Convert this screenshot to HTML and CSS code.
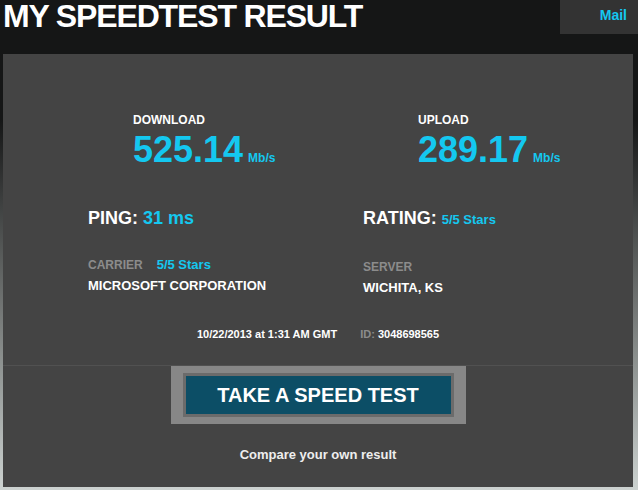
FILE: index.html
```html
<!DOCTYPE html>
<html lang="en">
<head>
  <meta charset="UTF-8" />
  <meta name="viewport" content="width=device-width, initial-scale=1.0" />
  <title>My Speedtest Result</title>
  <link rel="stylesheet" href="styles.css">
</head>
<body>
  <header class="topbar">
    <h1 class="title">MY SPEEDTEST RESULT</h1>
    <a class="mail" href="#">Mail</a>
  </header>

  <main class="panel">
    <!-- Download / upload -->
    <div class="speeds">
      <div class="speed">
        <div class="label">DOWNLOAD</div>
        <div class="value">525.14<span class="unit">Mb/s</span></div>
      </div>
      <div class="speed">
        <div class="label">UPLOAD</div>
        <div class="value">289.17<span class="unit">Mb/s</span></div>
      </div>
    </div>

    <!-- Ping / rating -->
    <div class="stats">
      <div class="stat">
        <div class="big">PING: <span class="accent">31 ms</span></div>
        <div class="meta"><span class="dim">CARRIER</span><span class="accent">5/5 Stars</span></div>
        <div class="name">MICROSOFT CORPORATION</div>
      </div>
      <div class="stat">
        <div class="big">RATING: <span class="accent small">5/5 Stars</span></div>
        <div class="meta"><span class="dim">SERVER</span></div>
        <div class="name">WICHITA, KS</div>
      </div>
    </div>

    <div class="stamp">
      <span>10/22/2013 at 1:31 AM GMT</span>
      <span class="id"><span class="dim">ID:</span> 3048698565</span>
    </div>

    <div class="cta">
      <a class="btn-frame" href="#"><span class="btn">TAKE A SPEED TEST</span></a>
      <p class="compare">Compare your own result</p>
    </div>
  </main>
</body>
</html>
```

FILE: styles.css
```css
body {
  margin: 0;
  height: 490px;
  overflow: hidden;
  font-family: "Liberation Sans", Arial, sans-serif;
  font-weight: bold;
  color: #fff;
  background: linear-gradient(to bottom, #151616 0, #151616 120px, #ccd2d0 490px);
}
.topbar {
  display: flex;
  justify-content: space-between;
  align-items: flex-start;
  height: 34px;
}
.title {
  margin: 0 0 0 3px;
  font-size: 32px;
  line-height: 32px;
  letter-spacing: -1.15px;
}
.mail {
  width: 78px;
  height: 34px;
  box-sizing: border-box;
  padding: 7px 11px 0 0;
  text-align: right;
  background: #333;
  color: #14c8f0;
  font-size: 14px;
  line-height: 16px;
  text-decoration: none;
}
.panel {
  margin: 20px 5px 0 3px;
  width: 630px;
  height: 433px;
  background: #444;
}
.accent {
  color: #14c8f0;
}
.dim {
  color: #8c8c8c;
}
.speeds {
  display: grid;
  grid-template-columns: 285px 1fr;
  padding: 59px 0 0 130px;
}
.label {
  font-size: 12px;
  line-height: 14px;
}
.value {
  margin-top: 5px;
  font-size: 36px;
  line-height: 36px;
  color: #14c8f0;
}
.unit {
  margin-left: 5px;
  font-size: 12px;
}
.stats {
  display: grid;
  grid-template-columns: 275px 1fr;
  margin-top: 32px;
  padding-left: 85px;
}
.big {
  font-size: 18px;
  line-height: 20px;
}
.big .small {
  font-size: 13px;
}
.meta {
  margin-top: 30px;
  font-size: 12px;
  line-height: 14px;
}
.meta .accent {
  margin-left: 14px;
  font-size: 13px;
}
.name {
  margin-top: 6px;
  font-size: 13px;
  line-height: 15px;
}
.stamp {
  margin-top: 33px;
  padding-bottom: 24px;
  border-bottom: 1px solid #515151;
  text-align: center;
  font-size: 11px;
  line-height: 13px;
}
.stamp .id {
  margin-left: 20px;
}
.cta {
  text-align: center;
}
.btn-frame {
  display: inline-block;
  padding: 7px 12px;
  background: #878787;
  text-decoration: none;
}
.btn {
  display: block;
  width: 265px;
  height: 38px;
  border: 3px solid #6b6b6b;
  background: #0c4e66;
  color: #fff;
  font-size: 20px;
  line-height: 38px;
}
.compare {
  margin: 23px 0 0;
  font-size: 13px;
  line-height: 15px;
  color: #eee;
}
```
